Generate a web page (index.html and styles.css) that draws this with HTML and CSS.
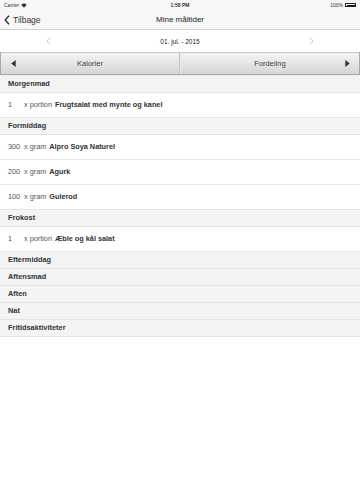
FILE: index.html
```html
<!DOCTYPE html>
<html lang="da">
<head>
    <meta charset="UTF-8">
    <title>Mine måltider</title>
    <link rel="stylesheet" href="styles.css">
</head>
<body>
    <div class="top">
        <div class="status">
            <span class="carrier">Carrier
                <svg class="wifi" width="6" height="5" viewBox="0 0 12 10"><path d="M6 9.5 L0.5 3.5 A8 8 0 0 1 11.5 3.5 Z" fill="#333"/></svg>
            </span>
            <span class="clock">1:58 PM</span>
            <span class="battery">100%
                <span class="batt"><span class="batt-fill"></span></span>
            </span>
        </div>
        <div class="navbar">
            <a class="back">
                <svg width="6" height="10" viewBox="0 0 6 10"><path d="M5 0.8 L1.2 5 L5 9.2" fill="none" stroke="#333" stroke-width="1.4"/></svg>
                Tilbage
            </a>
            <span class="title">Mine måltider</span>
        </div>
    </div>

    <div class="daterow">
        <svg class="chev" width="5" height="8" viewBox="0 0 5 8"><path d="M4.2 0.5 L1 4 L4.2 7.5" fill="none" stroke="#bbb" stroke-width="0.8"/></svg>
        <span class="date">01. jul. - 2015</span>
        <svg class="chev" width="5" height="8" viewBox="0 0 5 8"><path d="M0.8 0.5 L4 4 L0.8 7.5" fill="none" stroke="#bbb" stroke-width="0.8"/></svg>
    </div>

    <div class="segments">
        <div class="seg seg-left">
            <svg class="seg-icon" width="5" height="7" viewBox="0 0 5 7"><path d="M4.7 0 L0.2 3.5 L4.7 7 Z" fill="#333"/></svg>
            <span>Kalorier</span>
        </div>
        <div class="seg seg-right">
            <span>Fordeling</span>
            <svg class="seg-icon" width="5" height="7" viewBox="0 0 5 7"><path d="M0.3 0 L4.8 3.5 L0.3 7 Z" fill="#333"/></svg>
        </div>
    </div>

    <div class="meals">
        <div class="meal-head">Morgenmad</div>
        <div class="item"><span class="qty">1</span><span class="unit">x portion</span><b>Frugtsalat med mynte og kanel</b></div>

        <div class="meal-head">Formiddag</div>
        <div class="item"><span class="qty">300</span><span class="unit">x gram</span><b>Alpro Soya Naturel</b></div>
        <div class="item"><span class="qty">200</span><span class="unit">x gram</span><b>Agurk</b></div>
        <div class="item"><span class="qty">100</span><span class="unit">x gram</span><b>Gulerod</b></div>

        <div class="meal-head">Frokost</div>
        <div class="item"><span class="qty">1</span><span class="unit">x portion</span><b>Æble og kål salat</b></div>

        <div class="meal-head">Eftermiddag</div>
        <div class="meal-head">Aftensmad</div>
        <div class="meal-head">Aften</div>
        <div class="meal-head">Nat</div>
        <div class="meal-head">Fritidsaktiviteter</div>
    </div>
</body>
</html>
```

FILE: styles.css
```css
body {
    margin: 0;
    font-family: "Liberation Sans", Arial, sans-serif;
    color: #222;
    background: #fff;
    width: 360px;
    height: 480px;
}
.top {
    background: #f7f7f7;
    border-bottom: 1px solid #cfcfcf;
}
.status {
    height: 10px;
    display: flex;
    align-items: center;
    justify-content: space-between;
    padding: 0 4px;
    font-size: 5px;
    color: #333;
    position: relative;
}
.carrier {
    display: flex;
    align-items: center;
    gap: 2px;
}
.clock {
    position: absolute;
    left: 0;
    right: 0;
    text-align: center;
    font-weight: bold;
}
.battery {
    display: flex;
    align-items: center;
    gap: 2px;
}
.batt {
    width: 11px;
    height: 4px;
    border: 0.5px solid #222;
    display: flex;
    padding: 0.5px;
    box-sizing: border-box;
}
.batt-fill {
    flex: 1;
    background: #111;
}
.navbar {
    height: 19px;
    display: flex;
    align-items: center;
    position: relative;
}
.back {
    display: flex;
    align-items: center;
    gap: 3px;
    padding-left: 4px;
    font-size: 8.5px;
    color: #333;
    position: relative;
    z-index: 1;
}
.title {
    position: absolute;
    left: 0;
    right: 0;
    text-align: center;
    font-size: 8px;
    color: #222;
}
.daterow {
    height: 22px;
    display: flex;
    align-items: center;
    justify-content: space-between;
    padding: 0 46px;
    background: #fff;
}
.date {
    font-size: 6.5px;
    color: #222;
}
.segments {
    display: flex;
    height: 21px;
    border-top: 1px solid #c8c8c8;
    border-bottom: 1px solid #a9a9a9;
    border-left: 1px solid #aaa;
    border-right: 1px solid #aaa;
}
.seg {
    flex: 1;
    display: flex;
    align-items: center;
    justify-content: center;
    position: relative;
    font-size: 7.5px;
    color: #444;
    background: linear-gradient(#f4f4f4, #d6d6d6);
}
.seg-left {
    border-right: 1px solid #bdbdbd;
}
.seg-right {
    border-left: 1px solid #eeeeee;
}
.seg-icon {
    position: absolute;
    top: 7px;
}
.seg-left .seg-icon {
    left: 10px;
}
.seg-right .seg-icon {
    right: 9px;
}
.meals {
    border-top: 1px solid #eaeaea;
}
.meal-head {
    height: 16px;
    line-height: 16px;
    padding-left: 8px;
    font-size: 7.4px;
    font-weight: bold;
    color: #333;
    background: #f4f4f4;
    border-bottom: 1px solid #e4e4e4;
}
.item {
    height: 24px;
    line-height: 24px;
    padding-left: 8px;
    font-size: 7.3px;
    color: #555;
    background: #fff;
    border-bottom: 1px solid #e6e6e6;
    display: flex;
}
.qty {
    width: 16px;
}
.unit {
    margin-right: 3px;
}
.item b {
    color: #333;
}
```
